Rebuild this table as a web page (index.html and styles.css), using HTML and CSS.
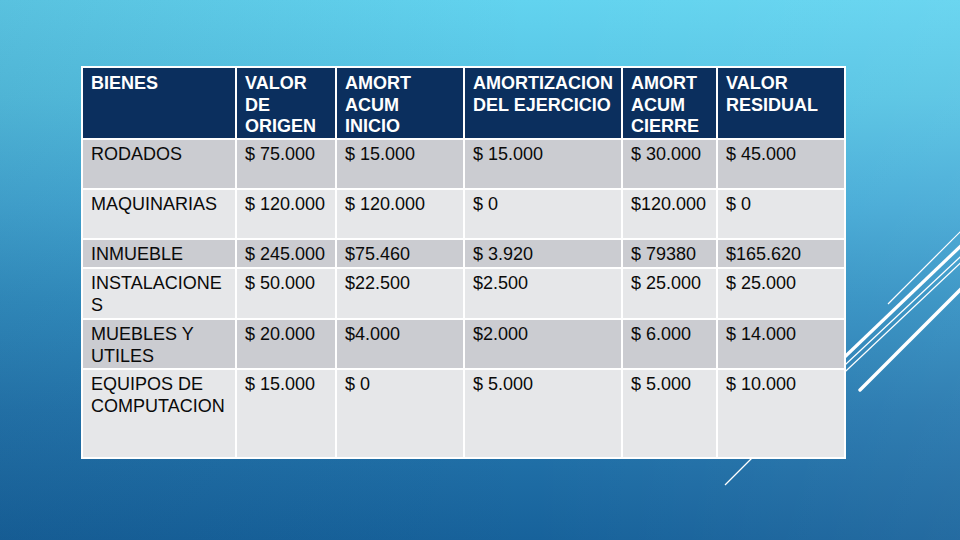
FILE: index.html
```html
<!DOCTYPE html>
<html lang="es">
<head>
<meta charset="utf-8">
<title>Bienes</title>
<link rel="stylesheet" href="styles.css">
</head>
<body>
<div class="slide">
  <svg class="deco" viewBox="0 0 960 540" width="960" height="540" aria-hidden="true">
    <line x1="888" y1="304" x2="980" y2="212" stroke="#ffffff" stroke-width="1.2"/>
    <line x1="830" y1="371" x2="990" y2="218" stroke="#ffffff" stroke-width="3.2"/>
    <line x1="830" y1="379" x2="990" y2="229" stroke="#ffffff" stroke-width="1.2"/>
    <line x1="830" y1="386" x2="990" y2="235" stroke="#ffffff" stroke-width="1.2"/>
    <line x1="860" y1="390" x2="990" y2="260" stroke="#ffffff" stroke-width="3.4" stroke-linecap="round"/>
    <line x1="725" y1="485" x2="760" y2="450" stroke="#ffffff" stroke-width="1.2"/>
  </svg>
  <table class="grid">
    <colgroup>
      <col class="c1"><col class="c2"><col class="c3"><col class="c4"><col class="c5"><col class="c6">
    </colgroup>
    <thead>
      <tr class="h-head">
        <th>BIENES</th>
        <th>VALOR DE ORIGEN</th>
        <th>AMORT ACUM INICIO</th>
        <th>AMORTIZACION DEL EJERCICIO</th>
        <th>AMORT ACUM CIERRE</th>
        <th>VALOR RESIDUAL</th>
      </tr>
    </thead>
    <tbody>
      <tr class="dark h-50">
        <td>RODADOS</td><td>$ 75.000</td><td>$ 15.000</td><td>$ 15.000</td><td>$ 30.000</td><td>$ 45.000</td>
      </tr>
      <tr class="light h-50">
        <td>MAQUINARIAS</td><td>$ 120.000</td><td>$ 120.000</td><td>$ 0</td><td>$120.000</td><td>$ 0</td>
      </tr>
      <tr class="dark h-29">
        <td>INMUEBLE</td><td>$ 245.000</td><td>$75.460</td><td>$ 3.920</td><td>$ 79380</td><td>$165.620</td>
      </tr>
      <tr class="light h-51">
        <td>INSTALACIONES</td><td>$ 50.000</td><td>$22.500</td><td>$2.500</td><td>$ 25.000</td><td>$ 25.000</td>
      </tr>
      <tr class="dark h-50">
        <td>MUEBLES Y UTILES</td><td>$ 20.000</td><td>$4.000</td><td>$2.000</td><td>$ 6.000</td><td>$ 14.000</td>
      </tr>
      <tr class="light h-89">
        <td>EQUIPOS DE COMPUTACION</td><td>$ 15.000</td><td>$ 0</td><td>$ 5.000</td><td>$ 5.000</td><td>$ 10.000</td>
      </tr>
    </tbody>
  </table>
</div>
</body>
</html>
```

FILE: styles.css
```css
html, body {
  margin: 0;
  padding: 0;
}

body {
  width: 960px;
  height: 540px;
  overflow: hidden;
  font-family: "Liberation Sans", Arial, sans-serif;
}

.slide {
  position: relative;
  width: 960px;
  height: 540px;
  box-sizing: border-box;
  padding: 66px 0 0 81px;
  background:
    linear-gradient(90deg, rgba(10, 40, 80, 0.10) 0%, rgba(10, 40, 80, 0) 55%, rgba(255, 255, 255, 0.06) 100%),
    linear-gradient(180deg, #62d3ef 0%, #57c4e4 18%, #45aad6 38%, #3390c2 56%, #2577ae 76%, #17629b 100%);
}

.deco {
  position: absolute;
  left: 0;
  top: 0;
  z-index: 0;
}

.grid {
  position: relative;
  z-index: 1;
  border-collapse: collapse;
  table-layout: fixed;
  width: 765px;
  font-size: 18px;
  line-height: 21.6px;
  border: 2px solid #ffffff;
}

.c1 { width: 154px; }
.c2 { width: 100px; }
.c3 { width: 128px; }
.c4 { width: 158px; }
.c5 { width: 95px; }
.c6 { width: 128px; }

.grid th,
.grid td {
  border: 2px solid #ffffff;
  padding: 4px 7px 0 8px;
  vertical-align: top;
  text-align: left;
  overflow-wrap: anywhere;
}

.grid th {
  background: #0b2f5e;
  color: #ffffff;
  font-weight: bold;
  padding-top: 5px;
}

.grid td {
  color: #0a0a0a;
  font-weight: normal;
}

.dark td { background: #cbccd1; }
.light td { background: #e6e7e9; }

.h-head { height: 72px; }
.h-50 { height: 50px; }
.h-29 { height: 29px; }
.h-51 { height: 51px; }
.h-89 { height: 89px; }
```
